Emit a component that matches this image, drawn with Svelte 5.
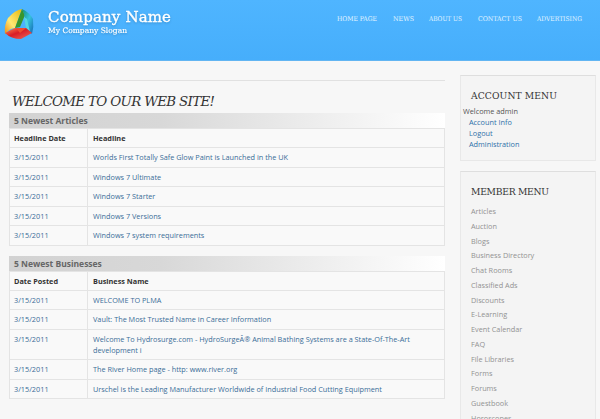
<script>
  const nav = ['HOME PAGE', 'NEWS', 'ABOUT US', 'CONTACT US', 'ADVERTISING'];
  const navWidths = [40, 21, 33, 44, 45];
  const tables = [
    {
      title: '5 Newest Articles', date: 'Headline Date', name: 'Headline',
      rows: [
        ['Worlds First Totally Safe Glow Paint is Launched in the UK'],
        ['Windows 7 Ultimate'], ['Windows 7 Starter'], ['Windows 7 Versions'],
        ['Windows 7 system requirements']
      ]
    },
    {
      title: '5 Newest Businesses', date: 'Date Posted', name: 'Business Name',
      rows: [
        ['WELCOME TO PLMA'],
        ['Vault: The Most Trusted Name in Career Information'],
        ['Welcome To Hydrosurge.com - HydroSurgeÂ® Animal Bathing Systems are a State-Of-The-Art', 'development i'],
        ['The River Home page - http: www.river.org'],
        ['Urschel is the Leading Manufacturer Worldwide of Industrial Food Cutting Equipment']
      ]
    }
  ];
  const members = ['Articles', 'Auction', 'Blogs', 'Business Directory', 'Chat Rooms', 'Classified Ads', 'Discounts', 'E-Learning', 'Event Calendar', 'FAQ', 'File Libraries', 'Forms', 'Forums', 'Guestbook', 'Horoscopes'];
</script>

<div class="page">
  <header>
    <svg class="logo" width="32" height="34" viewBox="0 0 32 34">
      <defs>
        <linearGradient id="gold" x1="0" y1="1" x2="1" y2="0"><stop offset="0" stop-color="#f08a10" /><stop offset=".4" stop-color="#ffe873" /><stop offset="1" stop-color="#e5b90a" /></linearGradient>
        <linearGradient id="sea" x1="0" y1="0" x2="1" y2="1"><stop offset="0" stop-color="#168f78" /><stop offset=".5" stop-color="#35c3dc" /><stop offset="1" stop-color="#1467b4" /></linearGradient>
        <linearGradient id="fire" x1="0" y1="0" x2="1" y2="1"><stop offset="0" stop-color="#ff8a51" /><stop offset=".45" stop-color="#d91e27" /><stop offset="1" stop-color="#f06c5c" /></linearGradient>
      </defs>
      <path d="M4 10 Q11 2 18 1 L15 9 L11 20 Q6 20 1 26 Q0 17 4 10Z" fill="url(#gold)" />
      <path d="M18 1 L15 9 L11 20 L16 19 L21 7Z" fill="#38962c" />
      <path d="M18 1 Q25 4 29 11 Q30 19 28 26 L22 20 Q22 10 18 1Z" fill="url(#sea)" />
      <path d="M20 9 L23 11 L26 24 L22 20Z" fill="#55d6e4" />
      <path d="M1 25 L11 20 L22 20 L28 25 L17 31 Q7 31 1 25Z" fill="url(#fire)" />
      <path d="M12 20 L22 20 L16 25Z" fill="#ef4c2e" />
    </svg>
    <svg class="brand" width="140" height="40">
      <text x="0" y="22" textLength="123" class="company">Company Name</text>
      <text x="0" y="32.5" textLength="79" class="slogan">My Company Slogan</text>
    </svg>
    <nav>
      {#each nav as item, i}
        <svg height="12" width={navWidths[i]}><text x="0" y="8.7" textLength={navWidths[i]} lengthAdjust="spacingAndGlyphs">{item}</text></svg>
      {/each}
    </nav>
  </header>
  <div class="body">
    <main>
      <svg class="welcome" width="220" height="22"><text x="1" y="16" textLength="203">WELCOME TO OUR WEB SITE!</text></svg>
      {#each tables as t}
        <section>
          <h2>{t.title}</h2>
          <div class="row head"><div class="date">{t.date}</div><div class="name">{t.name}</div></div>
          {#each t.rows as lines}
            <div class="row" class:tall={lines.length > 1}>
              <div class="date">3/15/2011</div>
              <div class="name">{#each lines as line}<div>{line}</div>{/each}</div>
            </div>
          {/each}
        </section>
      {/each}
    </main>
    <aside>
      <div class="box account">
        <svg width="110" height="16"><text x="0" y="11" textLength="86">ACCOUNT MENU</text></svg>
        <div class="hello">Welcome admin</div>
        <div class="links"><div>Account Info</div><div>Logout</div><div>Administration</div></div>
      </div>
      <div class="box member">
        <svg width="110" height="16"><text x="0" y="11" textLength="78">MEMBER MENU</text></svg>
        <ul>{#each members as m}<li>{m}</li>{/each}</ul>
      </div>
    </aside>
  </div>
</div>

<style>
  :global(body) { margin: 0; background: #f7f7f7; overflow: hidden; }
  .page { width: 600px; height: 419px; overflow: hidden; background: #f7f7f7; font: 7.3px/11px "Open Sans", "Noto Sans", sans-serif; color: #555; }
  svg { display: block; overflow: visible; }
  header { height: 61px; box-sizing: border-box; border-bottom: 1px solid #62b5f2; background: linear-gradient(#4fb5ff, #46aefb); display: flex; align-items: flex-start; }
  .logo { margin: 8px 0 0 4px; flex: none; }
  .brand { margin-left: 12px; flex: none; fill: #fff; font-family: "DejaVu Serif", serif; filter: drop-shadow(0 1px 1px #2369a070); }
  .company { font-size: 15px; font-weight: 400; stroke: #fff; stroke-width: .35px; }
  .slogan { font-size: 7.5px; stroke: #fff; stroke-width: .15px; }
  nav { display: flex; gap: 15.5px; margin: 12px 0 0 149px; fill: #e3f4ff; font: 6.6px "DejaVu Serif", serif; }
  .body { display: flex; height: 358px; }
  main { width: 436px; margin: 19px 0 0 9px; border-top: 1px solid #e1e1e1; height: 338px; }
  .welcome { margin: 9px 0 1px 2px; font: italic 13.4px "DejaVu Serif", serif; fill: #333; }
  section { margin-bottom: 10.3px; }
  h2 { margin: 0; height: 15px; font-size: 8.5px; line-height: 15px; padding-left: 5px; color: #666; background: linear-gradient(90deg, #d2d2d2, #d8d8d8 35%, #fff); }
  .row { display: flex; height: 19.5px; box-sizing: border-box; border: 1px solid #e4e4e4; border-width: 0 1px 1px; background: #f9f9f9; color: #3a6d98; }
  .head { border-top-width: 1px; height: 20.1px; font-weight: 700; color: #333; }
  .tall { height: 30.3px; }
  .date { width: 78px; box-sizing: border-box; border-right: 1px solid #e4e4e4; padding: 4px 0 0 4px; }
  .name { padding: 4px 0 0 5px; white-space: nowrap; }
  aside { margin: 14px 0 0 15px; width: 136px; }
  .box { box-sizing: border-box; border: 1px solid #e8e8e8; border-top-color: #dedede; background: #f4f4f4; }
  .box svg { margin-left: 10px; font: 9.2px "DejaVu Serif", serif; fill: #333; }
  .account { height: 86px; padding-top: 12px; margin-bottom: 10px; }
  .hello { margin: 2px 0 0 2px; }
  .links { margin-left: 8px; color: #2f70a8; }
  .member { height: 260px; padding-top: 12px; }
  ul { list-style: none; padding: 0; margin: 4px 0 0 10px; color: #929292; }
  li { height: 14.75px; line-height: 14.75px; }
</style>
